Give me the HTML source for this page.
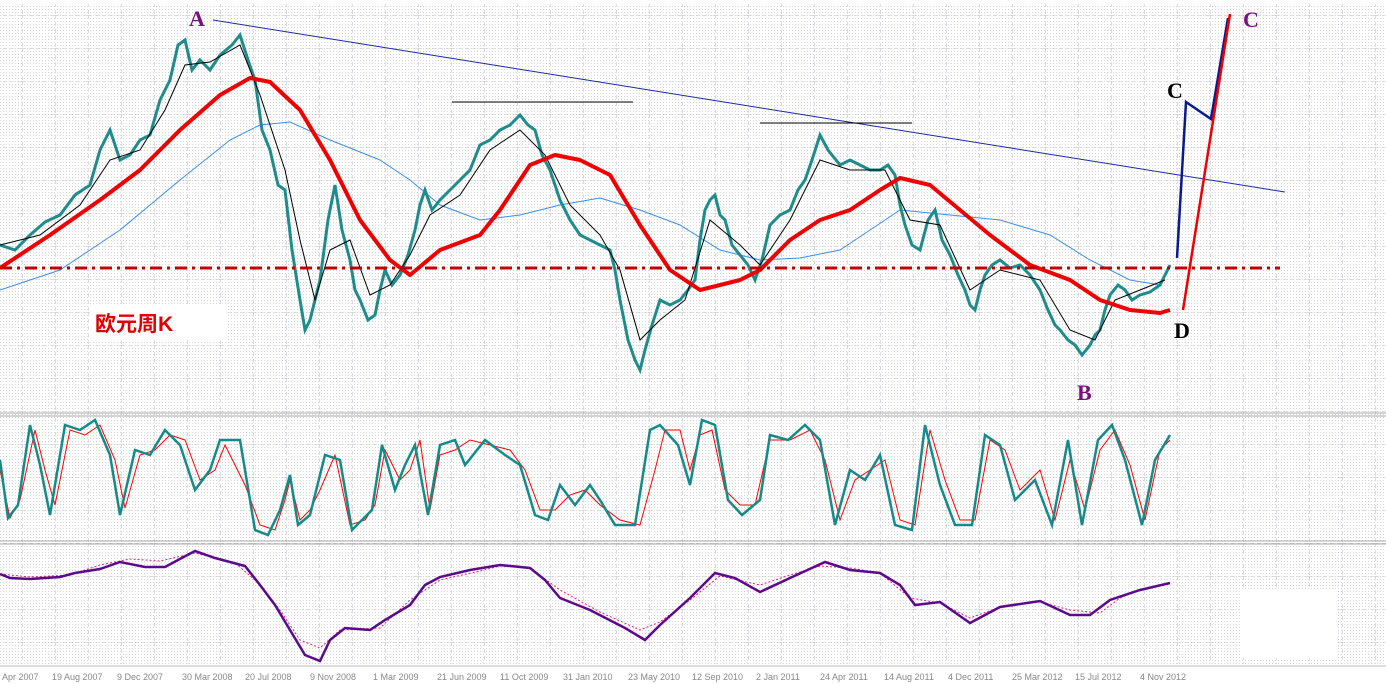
<!DOCTYPE html>
<html><head><meta charset="utf-8"><style>
html,body{margin:0;padding:0;background:#fff;}
svg{display:block;}
text{font-family:"Liberation Serif","Noto Serif CJK SC",serif;}
.ax text{font-family:"Liberation Sans",sans-serif;font-size:9px;fill:#888;}
.lb{font-weight:bold;}
</style></head><body>
<svg width="1386" height="684" viewBox="0 0 1386 684" xmlns="http://www.w3.org/2000/svg">
<defs>
<pattern id="dots" width="3" height="3" patternUnits="userSpaceOnUse"><rect x="0" y="0" width="1" height="1" fill="#d6d6d6"/></pattern>
<pattern id="grid" width="33" height="33" patternUnits="userSpaceOnUse" x="22" y="15">
<line x1="0" y1="0" x2="0" y2="33" stroke="#b8b8c8" stroke-dasharray="4,3"/>
<line x1="0" y1="0" x2="33" y2="0" stroke="#c8c8c8" stroke-dasharray="4,3"/>
</pattern>
</defs>
<rect width="1386" height="684" fill="#fff"/>
<rect x="0" y="4" width="1386" height="660" fill="url(#dots)"/>
<rect x="0" y="4" width="1386" height="660" fill="url(#grid)"/>
<line x1="0" y1="413" x2="1386" y2="413" stroke="#aaa"/><line x1="0" y1="416" x2="1386" y2="416" stroke="#aaa"/>
<line x1="0" y1="541" x2="1386" y2="541" stroke="#aaa"/><line x1="0" y1="544" x2="1386" y2="544" stroke="#aaa"/>
<line x1="0" y1="666" x2="1386" y2="666" stroke="#bbb"/>
<rect x="1240" y="590" width="97" height="68" fill="#fff"/>
<rect x="90" y="305" width="137" height="35" fill="#fff"/>

<polyline fill="none" stroke="#3b8ee8" stroke-width="1" points="0,290 60,270 120,230 180,180 230,140 260,125 290,122 330,140 380,160 410,180 440,205 480,220 520,215 560,205 600,198 640,210 680,225 720,250 760,260 800,258 840,250 870,230 900,210 950,215 1000,220 1050,235 1090,260 1130,280 1160,285"/>
<polyline fill="none" stroke="#1e8c8c" stroke-width="3" points="0,245 15,250 30,235 45,222 60,215 75,195 90,185 100,150 110,130 120,160 130,155 140,140 150,135 160,100 170,80 178,45 185,40 192,70 200,60 210,70 220,55 232,45 240,35 248,60 255,80 262,130 270,150 278,185 285,190 292,250 300,300 305,330 310,320 315,300 320,280 328,220 335,185 342,230 350,260 355,290 360,300 368,320 375,315 380,290 385,270 392,285 400,275 408,255 415,230 420,205 425,190 432,210 440,200 450,190 460,180 470,170 480,145 490,140 500,130 510,125 520,115 528,125 535,130 542,155 550,170 560,200 570,220 580,235 590,240 600,245 610,250 615,270 620,300 628,340 635,360 640,370 645,350 652,325 660,300 670,305 680,300 688,290 695,280 700,240 705,210 710,200 715,195 720,215 725,220 732,245 740,255 748,265 755,280 762,260 770,225 780,215 790,210 798,190 805,180 812,160 820,135 828,150 840,165 850,160 860,165 870,170 880,170 888,165 895,175 900,205 905,225 912,245 920,250 928,220 935,210 942,240 950,255 958,275 965,290 970,305 975,310 980,290 985,275 992,265 1000,260 1010,268 1020,265 1030,275 1040,290 1048,310 1055,325 1060,330 1068,340 1075,345 1082,355 1090,345 1095,335 1100,330 1105,310 1110,295 1118,285 1125,290 1132,300 1140,295 1150,292 1160,285 1165,275 1170,265"/>
<polyline fill="none" stroke="#000" stroke-width="1" points="0,245 40,235 80,205 110,160 140,150 165,110 185,65 210,62 240,45 260,95 285,170 300,240 315,300 330,250 350,240 370,295 390,285 410,255 430,215 460,195 490,150 520,130 545,155 570,205 600,235 620,270 640,340 660,320 685,300 710,220 740,245 760,265 790,220 820,160 850,170 885,170 910,220 940,225 970,290 1000,270 1040,280 1070,330 1095,340 1115,300 1140,290 1165,280"/>
<polyline fill="none" stroke="#f00000" stroke-width="4" stroke-linejoin="round" points="0,268 50,235 100,200 140,170 180,130 220,95 250,78 270,82 300,110 330,160 360,220 390,260 410,275 440,250 480,235 500,210 530,165 555,155 580,160 610,175 640,225 670,270 700,290 740,280 760,270 790,240 820,220 850,210 880,190 900,178 930,185 960,210 990,235 1030,265 1070,280 1100,300 1130,310 1160,313 1170,310"/>
<line x1="0" y1="268" x2="1280" y2="268" stroke="#c00000" stroke-width="3" stroke-dasharray="12,5,3,5"/>
<line x1="213" y1="20" x2="1285" y2="192" stroke="#1a2aa0" stroke-width="1"/>
<line x1="452" y1="102" x2="633" y2="102" stroke="#000"/>
<line x1="760" y1="123" x2="912" y2="123" stroke="#000"/>
<polyline fill="none" stroke="#0a1a8a" stroke-width="2.5" points="1177,258 1186,102 1211,119 1228,18"/>
<line x1="1183" y1="310" x2="1230" y2="14" stroke="#f00000" stroke-width="2.5"/>
<text class="lb" x="189" y="26" font-size="22" fill="#7a1080">A</text>
<text class="lb" x="1243" y="27" font-size="22" fill="#7a1080">C</text>
<text class="lb" x="1167" y="98" font-size="22" fill="#000">C</text>
<text class="lb" x="1174" y="338" font-size="22" fill="#000">D</text>
<text class="lb" x="1077" y="400" font-size="22" fill="#7a1080">B</text>
<text x="95" y="331" font-size="21" font-weight="bold" fill="#e00000" style="font-family:'Liberation Sans','Noto Sans CJK SC',sans-serif">欧元周K</text>

<polyline fill="none" stroke="#ff0000" stroke-width="1" points="0,470 10,518 20,500 35,430 45,470 55,505 70,430 85,435 100,425 115,460 125,508 140,455 155,450 170,435 185,440 200,480 215,470 225,445 245,485 260,525 275,530 285,500 290,480 300,520 310,510 320,490 335,455 350,525 365,520 375,505 385,450 400,480 410,470 420,440 430,510 440,455 455,450 470,440 490,445 510,450 525,470 540,510 555,510 570,495 585,490 600,505 620,520 640,525 655,470 665,430 680,430 690,470 700,435 712,430 725,490 740,505 755,505 770,440 790,440 810,430 825,460 840,520 855,480 870,470 885,460 900,520 915,525 930,430 945,480 960,520 975,520 990,440 1005,450 1020,490 1040,470 1055,520 1070,460 1085,510 1100,450 1115,430 1130,465 1145,520 1160,450 1170,440"/>
<polyline fill="none" stroke="#168a8a" stroke-width="2.5" points="0,460 8,518 18,505 30,425 40,465 50,515 65,425 80,430 95,420 110,455 120,515 135,450 150,455 165,430 180,445 195,490 210,470 220,440 240,440 255,530 268,535 280,510 290,475 298,525 310,515 325,455 340,460 352,530 362,520 372,510 382,445 395,490 405,465 415,445 428,515 440,445 455,440 465,465 485,440 505,455 520,465 535,515 548,520 560,485 575,505 590,485 600,500 615,525 635,525 650,430 660,425 678,445 690,485 702,420 715,425 728,500 742,515 760,500 770,435 788,440 805,425 820,440 835,525 850,470 865,480 880,455 895,525 912,530 925,425 940,485 955,525 972,525 985,435 1000,445 1015,500 1035,480 1052,525 1068,440 1082,525 1098,440 1112,425 1125,460 1142,525 1155,460 1170,435"/>
<polyline fill="none" stroke="#e0207a" stroke-width="1" stroke-dasharray="2,2" points="0,574 30,577 70,575 100,565 130,559 160,561 195,553 235,563 255,580 280,610 300,640 320,648 340,630 380,628 410,600 440,580 480,571 500,566 530,568 560,590 600,612 640,630 660,622 690,600 720,576 760,585 790,575 820,566 850,568 880,573 910,598 940,603 970,618 1000,607 1040,602 1070,610 1100,613 1120,598 1140,590 1170,584"/>
<polyline fill="none" stroke="#5a0a8a" stroke-width="2.5" points="0,574 10,578 30,579 60,577 75,573 100,569 120,562 145,567 165,567 178,560 195,551 215,558 245,566 260,585 275,605 290,630 305,655 320,661 330,640 345,628 370,630 385,620 410,605 425,585 440,577 470,570 500,565 530,568 545,580 560,598 590,610 625,628 645,640 660,625 690,598 715,573 735,578 760,592 790,578 825,562 850,570 880,573 900,585 915,605 940,602 970,623 1000,607 1040,601 1070,615 1090,615 1110,600 1140,590 1170,583"/>

<g class="ax">
<text x="2" y="680">Apr 2007</text>
<text x="52" y="680">19 Aug 2007</text>
<text x="117" y="680">9 Dec 2007</text>
<text x="182" y="680">30 Mar 2008</text>
<text x="245" y="680">20 Jul 2008</text>
<text x="310" y="680">9 Nov 2008</text>
<text x="373" y="680">1 Mar 2009</text>
<text x="437" y="680">21 Jun 2009</text>
<text x="500" y="680">11 Oct 2009</text>
<text x="563" y="680">31 Jan 2010</text>
<text x="628" y="680">23 May 2010</text>
<text x="692" y="680">12 Sep 2010</text>
<text x="756" y="680">2 Jan 2011</text>
<text x="820" y="680">24 Apr 2011</text>
<text x="884" y="680">14 Aug 2011</text>
<text x="948" y="680">4 Dec 2011</text>
<text x="1012" y="680">25 Mar 2012</text>
<text x="1075" y="680">15 Jul 2012</text>
<text x="1140" y="680">4 Nov 2012</text>
</g>
</svg>
</body></html>
